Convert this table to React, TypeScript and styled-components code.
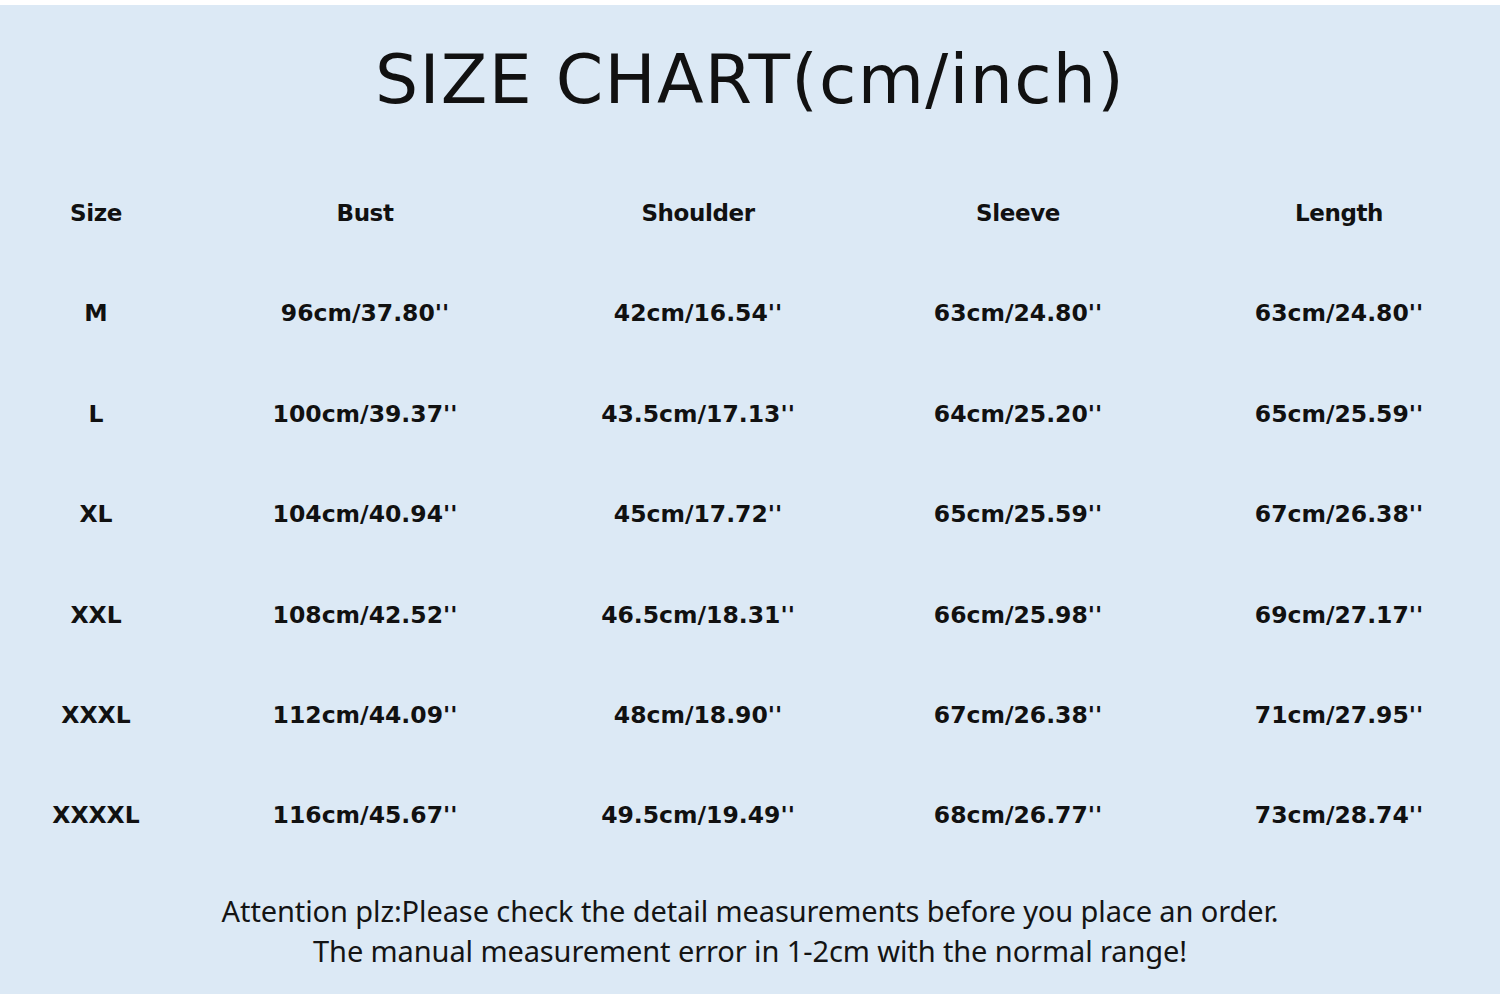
import React from "react";
import styled, { createGlobalStyle } from "styled-components";

const Global = createGlobalStyle`
  html, body {
    margin: 0;
    padding: 0;
    background: #ffffff;
  }
`;

const Sheet = styled.div`
  width: 1500px;
  height: 999px;
  box-sizing: border-box;
  padding: 5px 0 5px;
  background: #ffffff;
`;

const Panel = styled.div`
  height: 100%;
  background: #dce9f5;
  display: flex;
  flex-direction: column;
  align-items: center;
`;

const Title = styled.h1`
  margin: 35px 0 0;
  font-family: "DejaVu Sans", sans-serif;
  font-weight: 400;
  font-size: 68px;
  line-height: 80px;
  letter-spacing: 1.3px;
  color: #111;
  text-align: center;
`;

const Table = styled.div`
  margin-top: 78px;
  width: 100%;
  display: grid;
  grid-template-columns: 192px 346px 320px 320px 322px;
  grid-template-rows: repeat(6, 100.4px) 30px;
`;

const Cell = styled.div<{ $head?: boolean }>`
  display: flex;
  justify-content: center;
  align-items: flex-start;
  font-family: "DejaVu Sans", sans-serif;
  font-weight: 700;
  font-size: ${(p) => (p.$head ? "23px" : "23.5px")};
  line-height: 30px;
  color: #111;
  letter-spacing: ${(p) => (p.$head ? "-0.4px" : "0px")};
  white-space: nowrap;
`;

const Note = styled.div`
  margin-top: 61px;
  font-family: "Noto Sans", sans-serif;
  font-size: 29px;
  line-height: 40px;
  letter-spacing: -0.1px;
  color: #141414;
  text-align: center;
`;

const head = ["Size", "Bust", "Shoulder", "Sleeve", "Length"];

const rows = [
  ["M", "96cm/37.80''", "42cm/16.54''", "63cm/24.80''", "63cm/24.80''"],
  ["L", "100cm/39.37''", "43.5cm/17.13''", "64cm/25.20''", "65cm/25.59''"],
  ["XL", "104cm/40.94''", "45cm/17.72''", "65cm/25.59''", "67cm/26.38''"],
  ["XXL", "108cm/42.52''", "46.5cm/18.31''", "66cm/25.98''", "69cm/27.17''"],
  ["XXXL", "112cm/44.09''", "48cm/18.90''", "67cm/26.38''", "71cm/27.95''"],
  ["XXXXL", "116cm/45.67''", "49.5cm/19.49''", "68cm/26.77''", "73cm/28.74''"],
];

const App = () => {
  return (
    <Sheet>
      <Global />
      <Panel>
        <Title>SIZE CHART(cm/inch)</Title>
        <Table>
          {head.map((h) => (
            <Cell $head key={h}>
              {h}
            </Cell>
          ))}
          {rows.map((r) =>
            r.map((v, i) => <Cell key={r[0] + i}>{v}</Cell>)
          )}
        </Table>
        <Note>
          Attention plz:Please check the detail measurements before you place an order.
          <br />
          The manual measurement error in 1-2cm with the normal range!
        </Note>
      </Panel>
    </Sheet>
  );
};

export default App;
